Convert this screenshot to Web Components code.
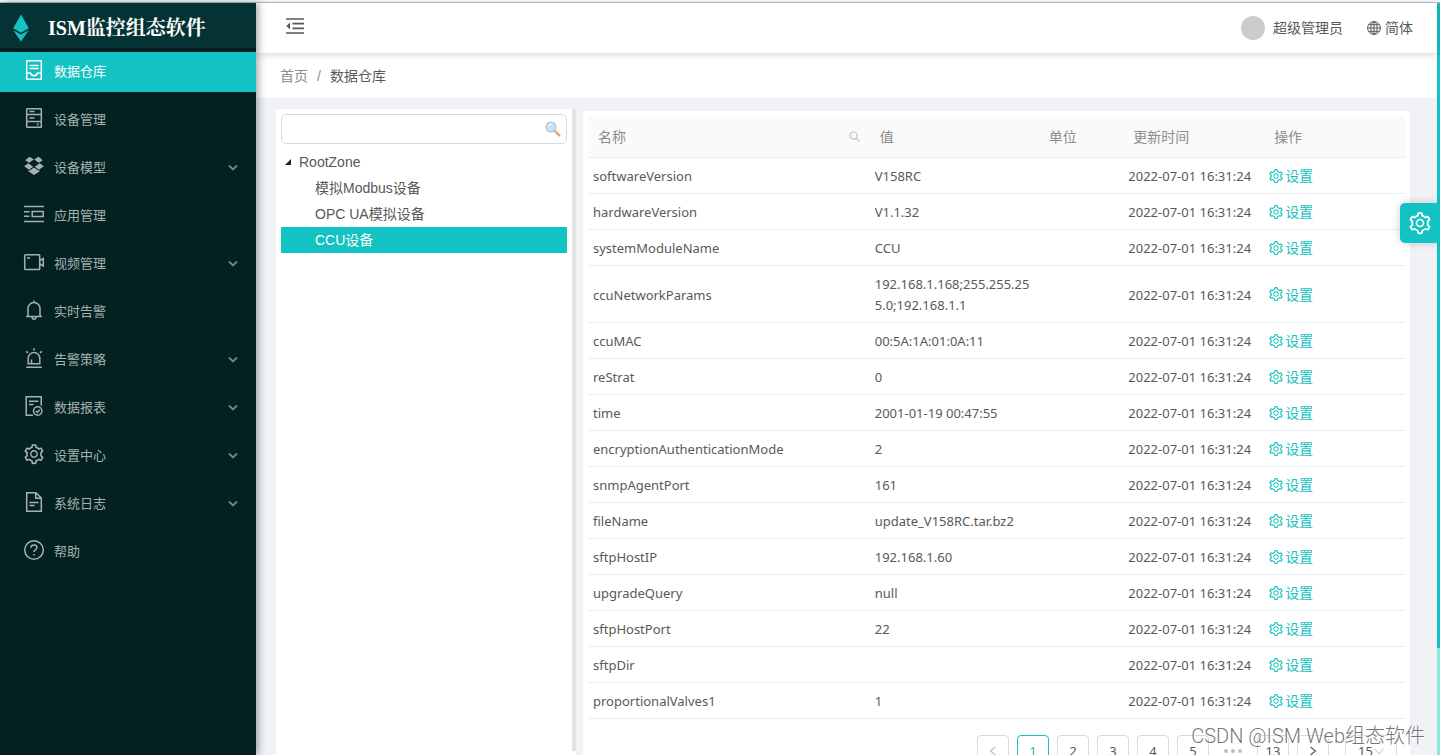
<!DOCTYPE html>
<html lang="zh-CN">
<head>
<meta charset="utf-8">
<title>ISM监控组态软件</title>
<style>
  :root {
    --teal: #13c2c2;
    --page: #f0f2f5;
    --line: #ebeef0;
    --sans: "Liberation Sans", "Noto Sans CJK SC", sans-serif;
    --ui: "Noto Sans", "Noto Sans CJK SC", sans-serif;
  }
  html, body { height: 100%; margin: 0; overflow: hidden; }
  body { font: 14px/22px var(--sans); color: #595959; }
</style>
</head>
<body>
<ism-app>
  <ism-sidebar slot="side">
    <ism-menu-item icon="inbox" active>数据仓库</ism-menu-item>
    <ism-menu-item icon="server">设备管理</ism-menu-item>
    <ism-menu-item icon="dropbox" more>设备模型</ism-menu-item>
    <ism-menu-item icon="app">应用管理</ism-menu-item>
    <ism-menu-item icon="video" more>视频管理</ism-menu-item>
    <ism-menu-item icon="bell">实时告警</ism-menu-item>
    <ism-menu-item icon="alert" more>告警策略</ism-menu-item>
    <ism-menu-item icon="report" more>数据报表</ism-menu-item>
    <ism-menu-item icon="setting" more>设置中心</ism-menu-item>
    <ism-menu-item icon="file" more>系统日志</ism-menu-item>
    <ism-menu-item icon="help">帮助</ism-menu-item>
  </ism-sidebar>
  <ism-topbar slot="top">超级管理员</ism-topbar>
  <ism-breadcrumb slot="crumb"><a slot="home" href="#home" style="color:#8c8c8c;text-decoration:none">首页</a>数据仓库</ism-breadcrumb>
  <ism-tree slot="tree"></ism-tree>
  <ism-table slot="main"></ism-table>
  <ism-pagination slot="main"></ism-pagination>
</ism-app>

<script>
const GEAR = '<path d="M924.8 625.7l-65.5-56c3.1-19 4.7-38.4 4.7-57.8s-1.6-38.8-4.7-57.8l65.5-56a32.03 32.03 0 009.3-35.2l-.9-2.6a443.74 443.74 0 00-79.7-137.9l-1.8-2.1a32.12 32.12 0 00-35.1-9.5l-81.3 28.9c-30-24.6-63.5-44-99.7-57.6l-15.7-85a32.05 32.05 0 00-25.8-25.7l-2.7-.5c-52.1-9.4-106.9-9.4-159 0l-2.7.5a32.05 32.05 0 00-25.8 25.7l-15.8 85.4a351.86 351.86 0 00-99 57.4l-81.9-29.1a32 32 0 00-35.1 9.5l-1.8 2.1a446.02 446.02 0 00-79.7 137.9l-.9 2.6c-4.5 12.5-.8 26.5 9.3 35.2l66.3 56.6c-3.1 18.8-4.6 38-4.6 57.1 0 19.2 1.5 38.4 4.6 57.1L99 625.5a32.03 32.03 0 00-9.3 35.2l.9 2.6c18.1 50.4 44.9 96.9 79.7 137.9l1.8 2.1a32.12 32.12 0 0035.1 9.5l81.9-29.1c29.8 24.5 63.1 43.9 99 57.4l15.8 85.4a32.05 32.05 0 0025.8 25.7l2.7.5a449.4 449.4 0 00159 0l2.7-.5a32.05 32.05 0 0025.8-25.7l15.7-85a350 350 0 0099.7-57.6l81.3 28.9a32 32 0 0035.1-9.5l1.8-2.1c34.8-41.1 61.6-87.5 79.7-137.9l.9-2.6c4.5-12.3.8-26.3-9.3-35zM788.3 465.9c2.5 15.1 3.8 30.6 3.8 46.1s-1.3 31-3.8 46.1l-6.6 40.1 74.7 63.9a370.03 370.03 0 01-42.6 73.6L721 702.8l-31.4 25.8c-23.9 19.6-50.5 35-79.3 45.8l-38.1 14.3-17.9 97a377.5 377.5 0 01-85 0l-17.9-97.2-37.8-14.5c-28.5-10.8-55-26.2-78.7-45.7l-31.4-25.9-93.4 33.2c-17-22.9-31.2-47.6-42.6-73.6l75.5-64.5-6.5-40c-2.4-14.9-3.7-30.3-3.7-45.5 0-15.3 1.2-30.6 3.7-45.5l6.5-40-75.5-64.5c11.3-26.1 25.6-50.7 42.6-73.6l93.4 33.2 31.4-25.9c23.7-19.5 50.2-34.9 78.7-45.7l37.9-14.3 17.9-97.2c28.1-3.2 56.8-3.2 85 0l17.9 97 38.1 14.3c28.7 10.8 55.4 26.2 79.3 45.8l31.4 25.8 92.8-32.9c17 22.9 31.2 47.6 42.6 73.6L781.8 426l6.5 39.9zM512 326c-97.2 0-176 78.8-176 176s78.8 176 176 176 176-78.8 176-176-78.8-176-176-176zm79.2 255.2A111.6 111.6 0 01512 614c-29.9 0-58-11.7-79.2-32.8A111.6 111.6 0 01400 502c0-29.9 11.7-58 32.8-79.2C454 401.6 482.1 390 512 390c29.9 0 58 11.6 79.2 32.8A111.6 111.6 0 01624 502c0 29.9-11.7 58-32.8 79.2z"/>';

/* name: [viewBox, markup, filled] */
const ICONS = {
  inbox: ['0 0 20 20', '<rect x="2.7" y=".7" width="14.6" height="18.6" rx=".5"/><path d="M5.5 5.500h9M5.5 8.5h9M3 13h3.5c.5 1.8 1.8 2.7 3.5 2.7s3-.9 3.5-2.7H17"/>'],
  server: ['0 0 20 20', '<rect x="2.7" y=".7" width="14.6" height="18.6" rx=".5"/><path d="M3 6.500h14M3 13.500h14M5.500 3.500h5M5.500 10h5"/><circle cx="13.8" cy="16.400" r=".3"/>'],
  dropbox: ['0 0 20 20', '<path d="M5.500.800L9.800 3.600 5.200 6.800 1.200 4.200zM14.500.800l4.300 3.400-4 2.600L10.200 3.600zM4.300 7.300l4.900 3.500L5 13.800.200 10.300zM15.700 7.300l4.100 3L15 13.800l-4.200-3zM10 11.500l4.800 3.300.9-.5v1L10 19l-5.700-3.700v-1l.9.5z"/>', 1],
  app: ['0 0 20 20', '<path d="M0 2.500h20M0 17.500h20M0 7.700h5.500M0 12.300h5.500M8.200 7.500h11v5h-11z"/>'],
  video: ['0 0 20 20', '<rect x=".7" y="2.700" width="15" height="14.800" rx=".8"/><path d="M3 6h3M15.800 8.500l3.500-2v7.500l-3.500-2"/>'],
  bell: ['0 0 20 20', '<path d="M4 16.300V8.500a6 6 0 0 1 12 0v7.800M2 16.500h16M10 .5v2M8 17.300a2 1.800 0 0 0 4 0"/>'],
  alert: ['0 0 20 20', '<path d="M4.200 15.800v-5.500a5.800 5.800 0 0 1 11.600 0v5.500zM7.500 15v-3.500M2.200 19.200h15.600M10 .2v2.300M2.200 3.200l1.700 1.700M17.800 3.200l-1.700 1.700"/>'],
  report: ['0 0 20 20', '<path d="M9 19.300H2.200V.7h15v9M5 5.300h9.500M5 8.500h4.500"/><circle cx="13.700" cy="15" r="4.200"/><path d="M11.800 15l1.500 1.500 2.400-2.800"/>'],
  setting: ['64 56 896 896', GEAR, 1],
  file: ['0 0 20 20', '<path d="M2.700.7h9.200l5.400 5.400v13.200H2.700zM11.700 1v5.300H17M5.500 10.500h9M5.500 13.500h5"/>'],
  help: ['0 0 20 20', '<circle cx="10" cy="10" r="9.300"/><path d="M7 7.700C7 6 8.300 5 10 5s3 1 3 2.600c0 2.100-3 2-3 4.500M10 14v1.500"/>'],
  down: ['0 0 10 10', '<path stroke-width="1.800" d="M1 2.500l4 4 4-4"/>'],
  thinDown: ['0 0 10 10', '<path stroke-width="1" d="M.5 2.500L5 8l4.500-5.500"/>'],
  prev: ['0 0 10 10', '<path stroke-width="1.200" d="M7.500 1L2.500 5l5 4"/>'],
  next: ['0 0 10 10', '<path stroke-width="1.200" d="M2.500 1l5 4-5 4"/>'],
  search: ['0 0 12 12', '<circle cx="5" cy="5" r="3.900" stroke-width="1.200"/><path stroke-width="1.200" d="M7.900 7.900l3.600 3.600"/>'],
  globe: ['0 0 14 14', '<g stroke-width="1"><circle cx="7" cy="7" r="6.400"/><ellipse cx="7" cy="7" rx="3.200" ry="6.400"/><path d="M7 .6v12.800M.6 7h12.800M1.500 3.700h11M1.500 10.300h11"/></g>'],
  fold: ['0 0 18 16', '<path stroke-width="1.700" d="M0 1h18M6.500 5.700h11.500M6.500 10.300h11.500M0 15h18"/><path fill="currentColor" stroke="none" d="M4 4.500v7L.3 8z"/>'],
  logo: ['0 0 16 28', '<path d="M8 .5l7.800 13.800L8 18.700.2 14.300z"/><path d="M.2 16.300L8 20.600l7.800-4.300L8 27.500z"/>', 1],
  loupe: ['0 0 16 16', '<path d="M9.800 10l4.500 4.300" stroke="#e0a868" stroke-width="2.400" stroke-linecap="round"/><circle cx="6" cy="6" r="4.900" fill="#c6e2fb" stroke="#b9c3d3" stroke-width="1.300"/><path d="M3.500 5.300C4 3.800 5 3.200 6.500 3.200" stroke="#fff" stroke-width="1.200"/>'],
  caret: ['0 0 8 8', '<path d="M7 1v6H1z"/>', 1],
};

class Base extends HTMLElement {
  constructor() { super(); this.attachShadow({ mode: 'open' }); }
  connectedCallback() { if (!this.shadowRoot.firstChild) this.shadowRoot.innerHTML = this.view(); }
}

customElements.define('ism-icon', class extends Base {
  view() {
    const [box, body, fill] = ICONS[this.getAttribute('name')];
    const paint = fill ? 'fill="currentColor"' : 'fill="none" stroke="currentColor" stroke-width="1.5"';
    return `<style>
      :host { display: inline-block; width: 20px; height: 20px; flex: none; }
      svg { display: block; width: 100%; height: 100%; overflow: visible; }
    </style><svg viewBox="${box}" ${paint} aria-hidden="true">${body}</svg>`;
  }
});

customElements.define('ism-app', class extends Base {
  view() { return `<style>
      :host { display: grid; grid-template: 3px minmax(0, 1fr) / 256px minmax(0, 1fr) 3px; height: 100vh; position: relative; overflow: hidden; background: var(--page); }
      .strip { grid-column: 1 / -1; background: #fafafa; border-bottom: 1px solid #bfbfbf; box-sizing: border-box; }
      .side { display: grid; position: relative; z-index: 3; }
      .page { display: flex; flex-direction: column; min-width: 0; }
      .work { flex: 1; min-height: 0; display: flex; align-items: stretch; gap: 7px; padding: 11px 27px 0 20px; }
      .card { flex: 1; min-width: 0; box-sizing: border-box; margin-top: 2px; padding: 5px; background: #fff; overflow: hidden; }
      .scroll { background: linear-gradient(var(--teal) 645px, #87e8de 645px); }
      .fab { position: absolute; right: 0; top: 203px; z-index: 4; width: 40px; height: 40px; padding: 0; border: 0; border-radius: 5px 0 0 5px; background: var(--teal); color: #fff; display: grid; place-items: center; box-shadow: 0 0 8px rgba(0,0,0,.2); }
      .fab ism-icon { width: 22px; height: 22px; }
      .mark { position: absolute; right: 15px; bottom: 5px; z-index: 5; font: 300 20px/28px Roboto, "Noto Sans CJK SC", sans-serif; color: rgba(70,70,70,.75); text-shadow: 1px 1px 0 #fff; white-space: nowrap; pointer-events: none; }
    </style>
    <div class="strip"></div>
    <div class="side"><slot name="side"></slot></div>
    <div class="page">
      <slot name="top"></slot><slot name="crumb"></slot>
      <div class="work"><slot name="tree"></slot><main class="card"><slot name="main"></slot></main></div>
    </div>
    <div class="scroll"></div>
    <button class="fab" aria-label="设置"><ism-icon name="setting"></ism-icon></button>
    <div class="mark">CSDN @ISM Web组态软件</div>`; }
});

customElements.define('ism-sidebar', class extends Base {
  view() { return `<style>
      :host { display: block; background: #022120; box-shadow: 2px 0 8px rgba(0,21,41,.4); }
      header { display: flex; align-items: center; gap: 19px; height: 45px; padding: 0 13px; margin-bottom: 4px; background: #053333; color: var(--teal); }
      header ism-icon { width: 16px; height: 28px; margin-top: 4px; }
      h1 { margin: 0; padding-top: 4px; font: bold 20px/30px "Liberation Serif", "Noto Serif CJK SC", "Noto Sans CJK SC", serif; color: #fff; white-space: nowrap; }
      nav { display: flex; flex-direction: column; gap: 8px; }
    </style>
    <header><ism-icon name="logo"></ism-icon><h1>ISM监控组态软件</h1></header>
    <nav><slot></slot></nav>`; }
});

customElements.define('ism-menu-item', class extends Base {
  view() { return `<style>
      :host { display: block; color: #a6b1b1; font-size: 13px; }
      :host([active]) { background: var(--teal); color: #fff; }
      a { display: flex; align-items: center; gap: 10px; height: 40px; padding: 0 18px 0 24px; color: inherit; text-decoration: none; }
      .lead { margin-bottom: 4px; }
      .more { width: 10px; height: 10px; opacity: .7; }
      span { flex: 1; }
    </style>
    <a href="#${this.getAttribute('icon')}"><ism-icon class="lead" name="${this.getAttribute('icon')}"></ism-icon><span><slot></slot></span>${this.hasAttribute('more') ? '<ism-icon class="more" name="down"></ism-icon>' : ''}</a>`; }
});

customElements.define('ism-topbar', class extends Base {
  view() { return `<style>
      :host { display: flex; align-items: center; height: 50px; padding: 0 24px 0 30px; background: #fff; box-shadow: 0 1px 8px rgba(0,0,0,.18); position: relative; z-index: 2; color: #595959; }
      button { display: flex; align-items: center; padding: 0; border: 0; background: none; color: inherit; font: inherit; }
      .fold { margin-right: auto; padding-bottom: 4px; }
      .fold ism-icon { width: 18px; height: 16px; }
      .user { gap: 8px; margin-right: 24px; }
      .user i { width: 24px; height: 24px; border-radius: 50%; background: #ccc; }
      .lang { gap: 4px; }
      .lang ism-icon { width: 14px; height: 14px; }
    </style>
    <button class="fold" aria-label="收起菜单"><ism-icon name="fold"></ism-icon></button>
    <button class="user"><i></i><slot></slot></button>
    <button class="lang"><ism-icon name="globe"></ism-icon>简体</button>`; }
});

customElements.define('ism-breadcrumb', class extends Base {
  view() { return `<style>
      :host { display: flex; align-items: center; gap: 9px; height: 45px; padding: 0 24px; background: #fff; color: #595959; }
      i { font-style: normal; color: #8c8c8c; }
    </style><slot name="home"></slot><i>/</i><span><slot></slot></span>`; }
});

customElements.define('ism-tree', class extends Base {
  view() { return `<style>
      :host { display: block; width: 300px; box-sizing: border-box; padding-bottom: 4px; background: #fff; }
      .pane { height: 100%; box-sizing: border-box; padding: 5px; border-right: 4px solid #e3e3e3; }
      .find { display: flex; align-items: center; height: 30px; box-sizing: border-box; padding: 0 5px 0 8px; margin-bottom: 5px; border: 1px solid #d9d9d9; border-radius: 5px; }
      input { flex: 1; min-width: 0; border: 0; outline: 0; background: none; font: inherit; color: inherit; }
      .find ism-icon { width: 16px; height: 16px; }
      ul { list-style: none; margin: 0; padding: 0; line-height: 26px; }
      .row { display: flex; align-items: center; gap: 7px; padding-left: 3px; }
      .row ism-icon { width: 8px; height: 8px; color: #222; }
      .leaf { padding-left: 34px; }
      .on { background: var(--teal); color: #fff; }
    </style>
    <div class="pane">
      <div class="find"><input type="text" aria-label="搜索"><ism-icon name="loupe"></ism-icon></div>
      <ul><li><div class="row"><ism-icon name="caret"></ism-icon>RootZone</div>
        <ul><li class="leaf">模拟Modbus设备</li><li class="leaf">OPC UA模拟设备</li><li class="leaf on">CCU设备</li></ul>
      </li></ul>
    </div>`; }
});

const ROWS = [
  ['softwareVersion', 'V158RC'], ['hardwareVersion', 'V1.1.32'], ['systemModuleName', 'CCU'],
  ['ccuNetworkParams', '192.168.1.168;255.255.255.0;192.168.1.1'], ['ccuMAC', '00:5A:1A:01:0A:11'],
  ['reStrat', '0'], ['time', '2001-01-19 00:47:55'], ['encryptionAuthenticationMode', '2'],
  ['snmpAgentPort', '161'], ['fileName', 'update_V158RC.tar.bz2'], ['sftpHostIP', '192.168.1.60'],
  ['upgradeQuery', 'null'], ['sftpHostPort', '22'], ['sftpDir', ''], ['proportionalValves1', '1'],
];

customElements.define('ism-table', class extends Base {
  view() { return `<style>
      :host { display: block; }
      table { width: 100%; table-layout: fixed; border-collapse: separate; border-spacing: 0; font: 13px/21px var(--ui); }
      th { height: 41px; padding: 0 10px; background: #fafafa; border-bottom: 1px solid var(--line); color: #8c8c8c; font: 14px/22px var(--sans); text-align: left; }
      th:first-child { border-radius: 5px 0 0 0; } th:last-child { border-radius: 0 5px 0 0; }
      td { padding: 8px 5px 6px; border-bottom: 1px solid var(--line); word-break: break-all; vertical-align: middle; }
      td:nth-child(4) { white-space: nowrap; }
      .name { display: flex; align-items: center; justify-content: space-between; }
      .name button { display: flex; padding: 0; border: 0; background: none; color: #bfbfbf; }
      .name ism-icon { width: 11px; height: 11px; }
      td a { display: flex; align-items: center; gap: 2px; font: 14px/21px var(--sans); color: var(--teal); text-decoration: none; }
      td ism-icon { width: 14px; height: 14px; margin-bottom: 2px; }
      .a { width: 200px; } .b { width: 120px; } .c { width: 60px; } .d { width: 100px; }
    </style>
    <table><colgroup><col class="a"><col class="b"><col class="c"><col class="d"><col class="d"></colgroup>
      <thead><tr><th><div class="name">名称<button aria-label="筛选"><ism-icon name="search"></ism-icon></button></div></th><th>值</th><th>单位</th><th>更新时间</th><th>操作</th></tr></thead>
      <tbody>${ROWS.map(([n, v]) => `<tr><td>${n}</td><td>${v}</td><td></td><td>2022-07-01 16:31:24</td><td><a href="#set"><ism-icon name="setting"></ism-icon>设置</a></td></tr>`).join('')}</tbody>
    </table>`; }
});

customElements.define('ism-pagination', class extends Base {
  view() { return `<style>
      :host { display: flex; justify-content: flex-end; gap: 8px; padding: 16px 8px; font: 13px/30px var(--ui); }
      button, select { box-sizing: border-box; height: 32px; padding: 0; border: 1px solid #d9d9d9; border-radius: 4px; background: #fff; color: #595959; font: inherit; }
      button { width: 32px; display: grid; place-items: center; }
      button ism-icon { width: 10px; height: 10px; }
      .on { border-color: var(--teal); color: var(--teal); }
      .off { color: #bfbfbf; }
      .dots { width: 32px; display: flex; align-items: center; justify-content: center; gap: 3px; }
      .dots i { width: 4px; height: 4px; border-radius: 50%; background: #bfbfbf; }
      .size { position: relative; margin-left: 8px; }
      select { appearance: none; width: 52px; padding-left: 12px; }
      .size ism-icon { position: absolute; right: 13px; top: 11px; width: 10px; height: 10px; color: #bfbfbf; }
    </style>
    <button class="off" aria-label="上一页"><ism-icon name="prev"></ism-icon></button>
    <button class="on">1</button><button>2</button><button>3</button><button>4</button><button>5</button>
    <span class="dots"><i></i><i></i><i></i></span>
    <button>13</button><button aria-label="下一页"><ism-icon name="next"></ism-icon></button>
    <label class="size"><select aria-label="每页条数"><option>15</option></select><ism-icon name="thinDown"></ism-icon></label>`; }
});
</script>
</body>
</html>
